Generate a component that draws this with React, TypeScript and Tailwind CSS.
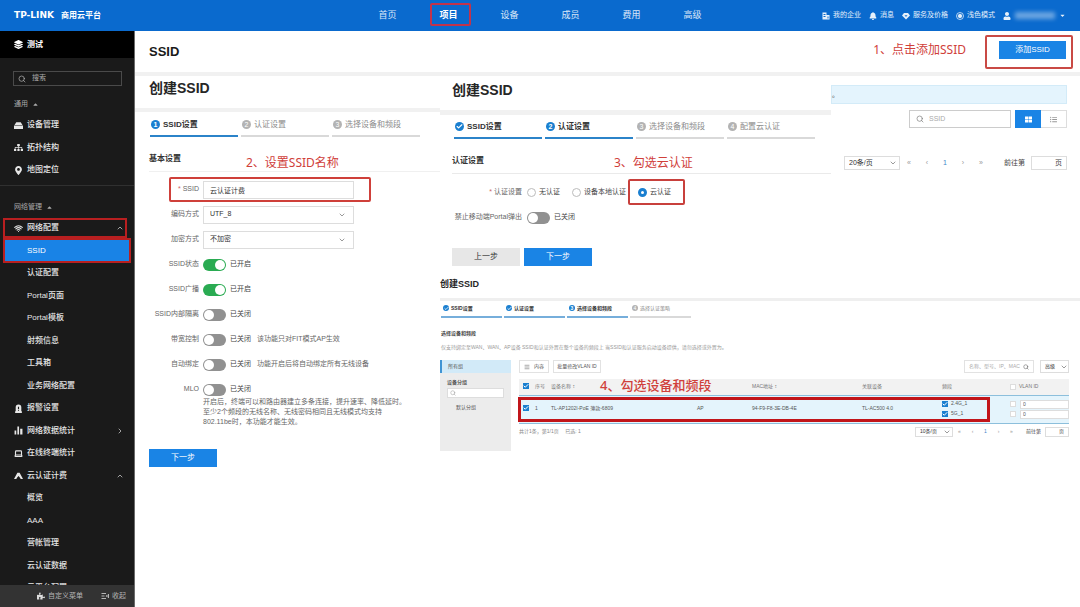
import type { ReactNode } from 'react'
import { ChevronDown, ChevronUp, ChevronRight, Search, Wifi, Check, Menu, Laptop } from 'lucide-react'
import { FaLayerGroup, FaBell, FaUser, FaSitemap, FaMapMarkerAlt, FaPuzzlePiece, FaCaretDown, FaCaretUp, FaThLarge, FaListUl } from 'react-icons/fa'
import clsx from 'clsx'

interface MenuItem {
  label: string
  icon?: ReactNode
  arrow?: 'up' | 'right'
  active?: boolean
  marked?: boolean
}

const TOP_NAV = ['首页', '项目', '设备', '成员', '费用', '高级']

const DeviceIcon = () => (
  <svg viewBox="0 0 16 16" className="size-[9px]" fill="currentColor">
    <path d="M4 2h8l3 5H1zM0 8h16v6H0z" />
  </svg>
)

const AlarmIcon = () => (
  <svg viewBox="0 0 16 16" className="size-[9px]" fill="currentColor">
    <path fillRule="evenodd" d="M3 13V6a5 5 0 0 1 10 0v7h1v3H2v-3zM7 5v4h2V5zm0 5v2h2v-2z" />
  </svg>
)

const BarsIcon = () => (
  <svg viewBox="0 0 16 16" className="size-[9px]" fill="currentColor">
    <path d="M1 8h3v7H1zM6 1h3v14H6zM11 5h4v10h-4z" />
  </svg>
)

const CloudAuthIcon = () => (
  <svg viewBox="0 0 16 16" className="size-[9px]" fill="currentColor">
    <path d="M0 14 6 3h4l6 11h-4l-2-3-2-2-2 2-2 3z" />
  </svg>
)

const CompanyIcon = () => (
  <svg viewBox="0 0 16 16" className="size-2" fill="currentColor">
    <path fillRule="evenodd" d="M1 1h8v5h6v9H1zM3 4v2h4V4zm0 4v2h4V8zm8 1v4h2V9z" />
  </svg>
)

const ServiceIcon = () => (
  <svg viewBox="0 0 16 16" className="size-2" fill="currentColor">
    <path fillRule="evenodd" d="M4 2h8l4 5-8 8-8-8zM5 6l3 4 3-4H9L8 8 7 6z" />
  </svg>
)

const ThemeIcon = () => (
  <svg viewBox="0 0 16 16" className="size-2" fill="none" stroke="currentColor" strokeWidth="1.5">
    <circle cx="8" cy="8" r="7" />
    <circle cx="8" cy="8" r="3.5" fill="currentColor" />
  </svg>
)

const CollapseIcon = () => (
  <svg viewBox="0 0 16 16" className="size-2" fill="currentColor">
    <path d="M1 2h9v2H1zM1 7h6v2H1zM1 12h9v2H1zM9 8l4-3v6zM14 4h2v8h-2z" />
  </svg>
)

const COMMON_MENU: MenuItem[] = [
  { label: '设备管理', icon: <DeviceIcon /> },
  { label: '拓扑结构', icon: <FaSitemap className="size-[9px]" /> },
  { label: '地图定位', icon: <FaMapMarkerAlt className="size-[9px]" /> },
]

const NETWORK_MENU: MenuItem[] = [
  { label: '网络配置', icon: <Wifi className="size-[9px]" strokeWidth={3} />, arrow: 'up', marked: true },
  { label: 'SSID', active: true },
  { label: '认证配置' },
  { label: 'Portal页面' },
  { label: 'Portal模板' },
  { label: '射频信息' },
  { label: '工具箱' },
  { label: '业务网络配置' },
  { label: '报警设置', icon: <AlarmIcon /> },
  { label: '网络数据统计', icon: <BarsIcon />, arrow: 'right' },
  { label: '在线终端统计', icon: <Laptop className="size-[9px]" strokeWidth={3} /> },
  { label: '云认证计费', icon: <CloudAuthIcon />, arrow: 'up' },
  { label: '概览' },
  { label: 'AAA' },
  { label: '营帐管理' },
  { label: '云认证数据' },
  { label: '云平台配置' },
]

const SWITCHES = [
  { id: 'status', label: 'SSID状态', on: true, hint: '' },
  { id: 'broadcast', label: 'SSID广播', on: true, hint: '' },
  { id: 'isolate', label: 'SSID内部隔离', on: false, hint: '' },
  { id: 'bandwidth', label: '带宽控制', on: false, hint: '该功能只对FIT模式AP生效' },
  { id: 'bind', label: '自动绑定', on: false, hint: '功能开启后将自动绑定所有无线设备' },
  { id: 'mlo', label: 'MLO', on: false, hint: '' },
]

function TopBar() {
  return (
    <header className="flex h-[31px] items-center bg-[#0a6ace] pr-[14px] text-white">
      <div className="flex w-[357px] items-center gap-[7px] pl-[14px]">
        <span className="font-['DejaVu_Sans'] text-[9px] font-bold">TP-LINK</span>
        <span className="text-[8px] font-bold">商用云平台</span>
      </div>
      <nav className="flex">
        {TOP_NAV.map((name) => (
          <a key={name} href="#" className={clsx('relative w-[61px] text-center text-[9px] leading-[31px]', name === '项目' ? 'font-bold' : 'text-white/85')}>
            {name}
            {name === '项目' && <span className="absolute top-[3px] right-2 bottom-[5px] left-3 rounded-xs border-2 border-[#c2334b]" />}
          </a>
        ))}
      </nav>
      <div className="ml-auto flex items-center gap-2 text-[7px] text-white/90">
        <a href="#" className="flex items-center gap-[3px]"><CompanyIcon />我的企业</a>
        <a href="#" className="flex items-center gap-[3px]"><FaBell className="size-2" />消息</a>
        <a href="#" className="flex items-center gap-[3px]"><ServiceIcon />服务及价格</a>
        <a href="#" className="flex items-center gap-[3px]"><ThemeIcon />浅色模式</a>
        <button aria-label="账号" className="flex items-center gap-1">
          <FaUser className="size-2" />
          <span className="h-[7px] w-10 bg-white/40 blur-[2px]" />
          <FaCaretDown className="size-[7px]" />
        </button>
      </div>
    </header>
  )
}

function MenuList({ items }: { items: MenuItem[] }) {
  return (
    <ul className="mt-1">
      {items.map((item) => (
        <li key={item.label} className="relative h-[22px] px-1 even:h-[23px]">
          <a
            href="#"
            className={clsx(
              'flex h-full items-center gap-1 pr-[6px] pl-[10px] text-[8px] font-medium',
              item.active ? 'bg-[#1983e6] font-bold text-white' : 'text-[#e6e6e6]',
              item.marked && 'font-bold',
            )}
          >
            <span className="flex w-[9px]">{item.icon}</span>
            {item.label}
            {item.arrow === 'up' && <ChevronUp className="ml-auto size-2" />}
            {item.arrow === 'right' && <ChevronRight className="ml-auto size-2" />}
          </a>
          {item.marked && <span className="absolute top-px right-[7px] bottom-px left-[3px] border-2 border-[#b81f20]" />}
          {item.active && <span className="absolute -top-px right-[3px] -bottom-px left-[3px] border-2 border-[#b81f20]" />}
        </li>
      ))}
    </ul>
  )
}

function Sidebar() {
  return (
    <aside className="flex h-[calc(100vh-31px)] w-[135px] shrink-0 flex-col border-r border-[#6b6b6b] bg-[#1a1a1a] text-white">
      <div className="flex h-[27px] shrink-0 items-center gap-1 bg-black pl-[14px] text-[8px] font-bold">
        <FaLayerGroup className="size-[9px]" />
        测试
      </div>
      <div className="min-h-0 flex-1 overflow-hidden">
        <label className="mt-[13px] mr-3 ml-[13px] flex h-[15px] items-center gap-[6px] border border-[#4a4a4a] px-1">
          <Search className="size-2 shrink-0 text-[#bbb]" />
          <input aria-label="搜索" placeholder="搜索" className="w-full bg-transparent text-[7px] outline-none placeholder:text-[#aaa]" />
        </label>
        <h2 className="mt-3 flex items-center gap-1 pl-[14px] text-[7px] leading-3 text-[#aaa]">
          通用 <FaCaretUp className="size-[7px]" />
        </h2>
        <MenuList items={COMMON_MENU} />
        <hr className="mt-1 border-[#303030]" />
        <h2 className="mt-[15px] flex items-center gap-1 pl-[14px] text-[7px] leading-3 text-[#aaa]">
          网络管理 <FaCaretUp className="size-[7px]" />
        </h2>
        <MenuList items={NETWORK_MENU} />
      </div>
      <div className="flex h-[22px] shrink-0 items-center justify-end gap-[18px] bg-[#333] pr-2 text-[7px] text-[#b5b5b5]">
        <button className="flex items-center gap-[3px]"><FaPuzzlePiece className="size-2 text-[#ddd]" />自定义菜单</button>
        <button className="flex items-center gap-[3px]"><CollapseIcon />收起</button>
      </div>
    </aside>
  )
}

function Steps({ names, current, small }: { names: string[]; current: number; small?: boolean }) {
  return (
    <ol className={clsx('flex', small ? 'gap-[2px]' : 'gap-[3px]')}>
      {names.map((name, i) => {
        const reached = i <= current
        return (
          <li
            key={name}
            className={clsx(
              'flex items-start border-b-2',
              small ? 'h-[15px] w-[61px] gap-[2px] pl-[2px] text-[5px] leading-[10px]' : 'h-[18px] w-[88px] gap-[3px] pl-px text-[8px] leading-[11px]',
              reached ? 'font-bold text-[#333]' : 'border-[#d9d9d9] text-[#8c8c8c]',
              reached && (small ? 'border-[#76aedb]' : 'border-[#2b83c9]'),
            )}
          >
            <span
              className={clsx(
                'flex shrink-0 items-center justify-center rounded-full text-white',
                small ? 'mt-[2px] size-[6px] text-[5px]' : 'mt-px size-[9px] text-[7px]',
                reached ? 'bg-[#1a7fd0]' : 'bg-[#b3b3b3]',
              )}
            >
              {i < current ? <Check className={small ? 'size-[5px]' : 'size-[7px]'} strokeWidth={4} /> : i + 1}
            </span>
            {name}
          </li>
        )
      })}
    </ol>
  )
}

function SelectBox({ id, label, value, className }: { id: string; label: string; value: string; className: string }) {
  return (
    <span className={clsx('relative flex shrink-0', className)}>
      <select id={id} aria-label={label} className="h-full w-full appearance-none border border-[#ddd] bg-white px-1 text-[#333] outline-none">
        <option>{value}</option>
      </select>
      <ChevronDown className="pointer-events-none absolute top-1/2 right-[5%] size-2 -translate-y-1/2 text-[#666]" />
    </span>
  )
}

function Toggle({ id, on }: { id: string; on: boolean }) {
  return (
    <>
      <input
        id={id}
        type="checkbox"
        role="switch"
        defaultChecked={on}
        className="flex h-3 w-[23px] shrink-0 appearance-none items-center rounded-full bg-[#919191] px-px before:size-[10px] before:rounded-full before:bg-white checked:justify-end checked:bg-[#2aab52]"
      />
      <span className="ml-1 text-[#444]">{on ? '已开启' : '已关闭'}</span>
    </>
  )
}

function Tick({ label, checked }: { label: string; checked?: boolean }) {
  return (
    <span className="relative inline-flex size-[6px] shrink-0">
      <input
        type="checkbox"
        aria-label={label}
        defaultChecked={checked}
        className="peer size-[6px] appearance-none border border-[#ddd] bg-white checked:border-[#1a7fd0] checked:bg-[#1a7fd0]"
      />
      <Check className="pointer-events-none absolute inset-0 hidden size-[6px] text-white peer-checked:block" strokeWidth={4} />
    </span>
  )
}

function Note({ children, className }: { children: ReactNode; className: string }) {
  return (
    <span className={clsx("absolute font-['Noto_Sans','Noto_Sans_CJK_SC',sans-serif] whitespace-nowrap text-[#d0403a]", className)}>
      {children}
    </span>
  )
}

function Pager({ small, pageSize }: { small?: boolean; pageSize: string }) {
  return (
    <div className={clsx('flex items-center text-[#444]', small ? 'text-[5px]' : 'text-[7px]')}>
      <SelectBox id={small ? 'size-small' : 'size'} label="每页条数" value={pageSize} className={small ? 'h-[10px] w-[38px]' : 'h-[14px] w-[56px]'} />
      {['«', '‹', '1', '›', '»'].map((mark) => (
        <button key={mark} className={clsx(small ? 'w-[13px]' : 'w-[18px]', mark === '1' ? 'text-[#3f86c9]' : 'text-[#999]')}>{mark}</button>
      ))}
      <label className={clsx('flex items-center', small ? 'ml-2 gap-1' : 'ml-[14px] gap-[6px]')}>
        前往第
        <span className={clsx('flex items-center border border-[#ddd] bg-white pr-1', small ? 'h-[10px] w-6' : 'h-[14px] w-9')}>
          <input className="w-full min-w-0 outline-none" />页
        </span>
      </label>
    </div>
  )
}

function BasicPanel() {
  return (
    <section className="w-[305px] shrink-0">
      <h2 className="h-8 pt-1 pl-[14px] text-[14px] leading-4 font-bold text-[#262626]">创建SSID</h2>
      <div className="h-1 bg-[#f1f1f1]" />
      <div className="pt-[7px] pl-[15px]">
        <Steps names={['SSID设置', '认证设置', '选择设备和频段']} current={0} />
      </div>
      <form className="pl-[14px] text-[7px] text-[#666]">
        <h3 className="relative mt-[15px] h-5 border-b border-[#f0f0f0] text-[8px] leading-[14px] font-bold text-[#333]">
          基本设置
          <Note className="top-1 left-[97px] text-[12px] font-normal">2、设置SSID名称</Note>
        </h3>
        <div className="relative mt-[5px] flex h-[25px] items-center gap-1">
          <label htmlFor="ssid" className="w-[50px] text-right"><span className="text-[#c66]">*</span> SSID</label>
          <input id="ssid" defaultValue="云认证计费" className="h-[18px] w-[151px] border border-[#ddd] px-[6px] text-[#333] outline-none" />
          <span className="absolute inset-y-0 left-5 w-[202px] rounded-xs border-2 border-[#cf403a]" />
        </div>
        <div className="flex h-[25px] items-center gap-1">
          <label htmlFor="encoding" className="w-[50px] text-right">编码方式</label>
          <SelectBox id="encoding" label="编码方式" value="UTF_8" className="h-[18px] w-[151px] [&>select]:px-[6px]" />
        </div>
        <div className="flex h-[25px] items-center gap-1">
          <label htmlFor="cipher" className="w-[50px] text-right">加密方式</label>
          <SelectBox id="cipher" label="加密方式" value="不加密" className="h-[18px] w-[151px] [&>select]:px-[6px]" />
        </div>
        {SWITCHES.map((s) => (
          <div key={s.id} className="flex h-[25px] items-center">
            <label htmlFor={s.id} className="mr-1 w-[50px] text-right whitespace-nowrap">{s.label}</label>
            <Toggle id={s.id} on={s.on} />
            {s.hint && <span className="ml-[6px]">{s.hint}</span>}
          </div>
        ))}
        <p className="-mt-[5px] pl-[54px] leading-[10px] whitespace-nowrap">
          开启后，终端可以和路由器建立多条连接，提升速率、降低延时。<br />
          至少2个频段的无线名称、无线密码相同且无线模式均支持<br />
          802.11be时，本功能才能生效。
        </p>
        <button type="button" className="mt-[22px] h-[18px] w-[68px] bg-[#1a84e5] text-[8px] text-white">下一步</button>
      </form>
    </section>
  )
}

function Radio({ label, checked }: { label: string; checked?: boolean }) {
  return (
    <label className="relative flex items-center gap-[3px] text-[#444]">
      <input
        type="radio"
        name="auth"
        defaultChecked={checked}
        className="size-[9px] appearance-none rounded-full border border-[#bbb] checked:border-[3px] checked:border-[#1a7fd0]"
      />
      {label}
      {checked && <span className="absolute -top-2 -right-[14px] -bottom-2 -left-[10px] rounded-xs border-2 border-[#c8403c]" />}
    </label>
  )
}

function AuthPanel() {
  return (
    <section className="w-[391px] shrink-0">
      <h2 className="h-[34px] pt-[6px] pl-3 text-[14px] leading-4 font-bold text-[#262626]">创建SSID</h2>
      <div className="h-[5px] bg-[#f1f1f1]" />
      <div className="pt-[6px] pl-[14px]">
        <Steps names={['SSID设置', '认证设置', '选择设备和频段', '配置云认证']} current={1} />
      </div>
      <form className="pl-3 text-[7px] text-[#666]">
        <h3 className="relative mt-[15px] h-5 border-b border-[#eaeaea] text-[8px] leading-[14px] font-bold text-[#333]">
          认证设置
          <Note className="top-[2px] left-[162px] text-[12px] font-normal">3、勾选云认证</Note>
        </h3>
        <fieldset className="mt-[5px] flex h-[26px] items-center">
          <span className="mr-[5px] w-[70px] text-right"><span className="text-[#c66]">*</span> 认证设置</span>
          <div className="flex gap-3">
            <Radio label="无认证" />
            <Radio label="设备本地认证" />
            <Radio label="云认证" checked />
          </div>
        </fieldset>
        <div className="flex h-[25px] items-center">
          <label htmlFor="portal" className="mr-[5px] w-[70px] text-right whitespace-nowrap">禁止移动端Portal弹出</label>
          <Toggle id="portal" on={false} />
        </div>
        <div className="mt-[18px] flex gap-1 text-[8px]">
          <button type="button" className="h-[18px] w-[68px] bg-[#e7e7e7] text-[#333]">上一步</button>
          <button type="button" className="h-[18px] w-[68px] bg-[#1a84e5] text-white">下一步</button>
        </div>
      </form>
    </section>
  )
}

function ListPanel() {
  return (
    <section className="flex-1 pt-[9px] pr-[13px]">
      <div className="h-[19px] border border-[#d3ebf8] bg-[#e4f4fd] text-[7px] leading-[17px] text-[#444]">。</div>
      <div className="mt-[6px] flex h-[18px] justify-end gap-1">
        <label className="flex w-[102px] items-center gap-[5px] border border-[#ccc] px-[6px]">
          <Search className="size-2 shrink-0 text-[#777]" />
          <input aria-label="SSID" placeholder="SSID" className="w-full min-w-0 text-[7px] outline-none placeholder:text-[#aaa]" />
        </label>
        <div className="flex">
          <button aria-label="卡片" className="flex w-[26px] items-center justify-center bg-[#1a84e5] text-white"><FaThLarge className="size-[7px]" /></button>
          <button aria-label="列表" className="flex w-[26px] items-center justify-center border border-l-0 border-[#ddd] text-[#999]"><FaListUl className="size-[7px]" /></button>
        </div>
      </div>
      <div className="mt-7 flex justify-end">
        <Pager pageSize="20条/页" />
      </div>
    </section>
  )
}

function DeviceTable() {
  return (
    <div className="relative mt-[6px]">
      <table className="w-full table-fixed text-left text-[5px] text-[#555]">
        <colgroup>
          <col className="w-4" />
          <col className="w-4" />
          <col className="w-[146px]" />
          <col className="w-[55px]" />
          <col className="w-[110px]" />
          <col className="w-[80px]" />
          <col className="w-[68px]" />
          <col />
        </colgroup>
        <thead>
          <tr className="h-4 border-b border-[#8cbfdc] bg-[#f2f2f2] text-[#777] [&>th]:font-normal">
            <th className="pl-1"><Tick label="全选" checked /></th>
            <th>序号</th>
            <th>设备名称 ↕</th>
            <th aria-label="类型" />
            <th>MAC地址 ↕</th>
            <th>关联设备</th>
            <th>频段</th>
            <th><span className="flex items-center gap-[3px]"><Tick label="VLAN全选" />VLAN ID</span></th>
          </tr>
        </thead>
        <tbody>
          <tr className="h-7 border-b border-[#8cbfdc] bg-[#e4f4fc]">
            <td className="pl-1"><Tick label="选择设备" checked /></td>
            <td>1</td>
            <td>TL-AP1202I-PoE 薄款-6809</td>
            <td>AP</td>
            <td>94-F9-F8-3E-DB-4E</td>
            <td>TL-AC500 4.0</td>
            <td>
              {['2.4G_1', '5G_1'].map((band) => (
                <span key={band} className="flex h-[10px] items-center gap-[3px]"><Tick label={band} checked />{band}</span>
              ))}
            </td>
            <td>
              {['2.4G', '5G'].map((band) => (
                <span key={band} className="flex h-[10px] items-center gap-1">
                  <Tick label={`${band} VLAN`} />
                  <input aria-label={`${band} VLAN ID`} defaultValue="0" className="h-[9px] w-full min-w-0 border border-[#ddd] bg-white px-[2px] outline-none" />
                </span>
              ))}
            </td>
          </tr>
        </tbody>
      </table>
      <span className="absolute top-[18px] right-[79px] bottom-[2px] -left-px border-3 border-[#c1151a]" />
      <Note className="-top-[3px] left-[81px] text-[13px] leading-[18px] font-medium">4、勾选设备和频段</Note>
    </div>
  )
}

function DevicePanel() {
  return (
    <section className="pt-[11px]">
      <h2 className="text-[9px] leading-[14px] font-bold text-[#262626]">创建SSID</h2>
      <div className="mt-[7px] h-[3px] bg-[#efefef]" />
      <div className="mt-[2px] pl-px">
        <Steps small names={['SSID设置', '认证设置', '选择设备和频段', '选择认证策略']} current={2} />
      </div>
      <h3 className="mt-[10px] pl-px text-[5px] leading-[10px] font-bold text-[#444]">选择设备和频段</h3>
      <p className="mt-1 pl-px text-[5px] leading-[10px] text-[#999]">
        仅支持绑定至WAN、WAN、AP设备 SSID和认证外置在整个设备的频段上 当SSID和认证服务启动设备提供，请勿选择或外置为。
      </p>
      <div className="mt-2 flex gap-2 pr-[11px]">
        <div className="h-[91px] w-[71px] shrink-0 bg-[#ececec] text-[5px] text-[#555]">
          <div className="h-[13px] border-l-2 border-[#3f94d4] bg-[#d2eaf8] pl-[6px] leading-[13px]">所有组</div>
          <div className="pt-1 pr-[7px] pl-[7px]">
            <div className="leading-[10px] font-bold">设备分组</div>
            <label className="mt-px flex h-[10px] items-center border border-[#ddd] bg-white pl-[2px]">
              <Search className="size-[6px] shrink-0 text-[#999]" />
              <input aria-label="搜索分组" className="w-full min-w-0 outline-none" />
            </label>
            <div className="mt-1 pl-[9px] leading-[10px]">默认分组</div>
          </div>
        </div>
        <div className="min-w-0 flex-1">
          <div className="flex h-[13px] gap-1 text-[5px] text-[#555]">
            <button className="flex w-[30px] items-center justify-center gap-1 border border-[#e2e2e2]"><Menu className="size-[6px]" />内容</button>
            <button className="w-[48px] border border-[#e2e2e2]">批量修改VLAN ID</button>
            <label className="mr-[2px] ml-auto flex w-[70px] items-center border border-[#e2e2e2] px-1">
              <input aria-label="搜索设备" placeholder="名称、型号、IP、MAC" className="w-full min-w-0 outline-none placeholder:text-[#aaa]" />
              <Search className="size-[6px] shrink-0" />
            </label>
            <SelectBox id="advanced" label="高级" value="高级" className="w-[29px]" />
          </div>
          <DeviceTable />
          <div className="mt-[3px] flex items-center justify-between text-[5px] text-[#888]">
            <p>共计1条，第1/1页 <span className="ml-[5px]">已选: 1</span></p>
            <Pager small pageSize="10条/页" />
          </div>
        </div>
      </div>
    </section>
  )
}

export default function App() {
  return (
    <div className="min-h-screen bg-white font-['Liberation_Sans','Noto_Sans_CJK_SC',sans-serif]">
      <TopBar />
      <div className="flex">
        <Sidebar />
        <main className="min-w-0 flex-1">
          <div className="flex h-[41px] items-center pr-[7px] pl-[14px]">
            <h1 className="text-[13px] font-bold text-[#1a1a1a]">SSID</h1>
            <div className="relative ml-auto rounded-xs border-2 border-[#c94a45] pt-1 pr-[5px] pb-2 pl-3">
              <button className="block h-[18px] w-[67px] bg-[#1a84e5] text-[8px] text-white">添加SSID</button>
              <Note className="top-1 right-[105px] text-[12px]">1、点击添加SSID</Note>
            </div>
          </div>
          <div className="h-1 bg-[#f1f1f1]" />
          <div className="flex">
            <BasicPanel />
            <div className="min-w-0 flex-1">
              <div className="flex">
                <AuthPanel />
                <ListPanel />
              </div>
              <DevicePanel />
            </div>
          </div>
        </main>
      </div>
    </div>
  )
}
